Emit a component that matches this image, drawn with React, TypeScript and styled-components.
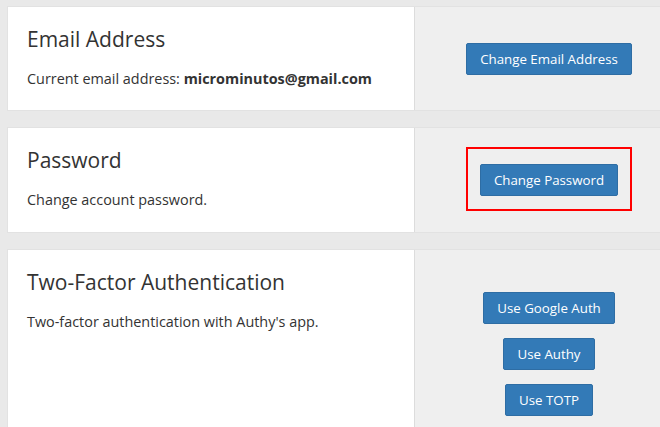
import React from 'react';
import styled, { createGlobalStyle } from 'styled-components';

const GlobalStyle = createGlobalStyle`
  html, body {
    margin: 0;
    padding: 0;
    background: #e9e9e9;
    overflow: hidden;
  }
  body {
    font-family: "Open Sans", "Liberation Sans", sans-serif;
    color: #333;
  }
`;

const Page = styled.div`
  display: flex;
  flex-direction: column;
  gap: 16px;
  padding: 6px 0 0 7px;
  width: 677px;
`;

const Card = styled.section<{ $height: number }>`
  display: grid;
  grid-template-columns: 406px 1fr;
  height: ${(p) => p.$height}px;
  flex-shrink: 0;
  box-sizing: border-box;
  border: 1px solid #e2e2e2;
  background: #fff;
`;

const Info = styled.div`
  padding: 20px 19px;
  background: #fff;
`;

const Title = styled.h3`
  margin: 0;
  font-size: 21px;
  line-height: 24px;
  font-weight: 400;
  color: #333;
`;

const Text = styled.p`
  margin: 18px 0 0;
  font-size: 14.4px;
  line-height: 20px;
  color: #333;

  strong {
    font-weight: 700;
  }
`;

const Actions = styled.div`
  display: flex;
  flex-direction: column;
  align-items: center;
  justify-content: center;
  gap: 14px;
  background: #efefef;
  border-left: 1px solid #dcdcdc;
`;

const Button = styled.button`
  font-family: "Open Sans", "Liberation Sans", sans-serif;
  font-size: 13.3px;
  line-height: 20px;
  padding: 5px 13px;
  color: #fff;
  background: #337ab7;
  border: 1px solid #2e6da4;
  border-radius: 2px;
  cursor: pointer;
`;

const Highlight = styled.div`
  position: relative;
  display: inline-flex;

  &::after {
    content: '';
    position: absolute;
    left: -14px;
    right: -14px;
    top: -17px;
    bottom: -15px;
    border: 2px solid #f00;
    pointer-events: none;
  }
`;

export default function App() {
  return (
    <>
      <GlobalStyle />
      <Page>
        <Card $height={105}>
          <Info>
            <Title>Email Address</Title>
            <Text>
              Current email address: <strong>microminutos@gmail.com</strong>
            </Text>
          </Info>
          <Actions>
            <Button>Change Email Address</Button>
          </Actions>
        </Card>

        <Card $height={106}>
          <Info>
            <Title>Password</Title>
            <Text>Change account password.</Text>
          </Info>
          <Actions>
            <Highlight>
              <Button>Change Password</Button>
            </Highlight>
          </Actions>
        </Card>

        <Card $height={210}>
          <Info>
            <Title>Two-Factor Authentication</Title>
            <Text>Two-factor authentication with Authy's app.</Text>
          </Info>
          <Actions>
            <Button>Use Google Auth</Button>
            <Button>Use Authy</Button>
            <Button>Use TOTP</Button>
          </Actions>
        </Card>
      </Page>
    </>
  );
}
